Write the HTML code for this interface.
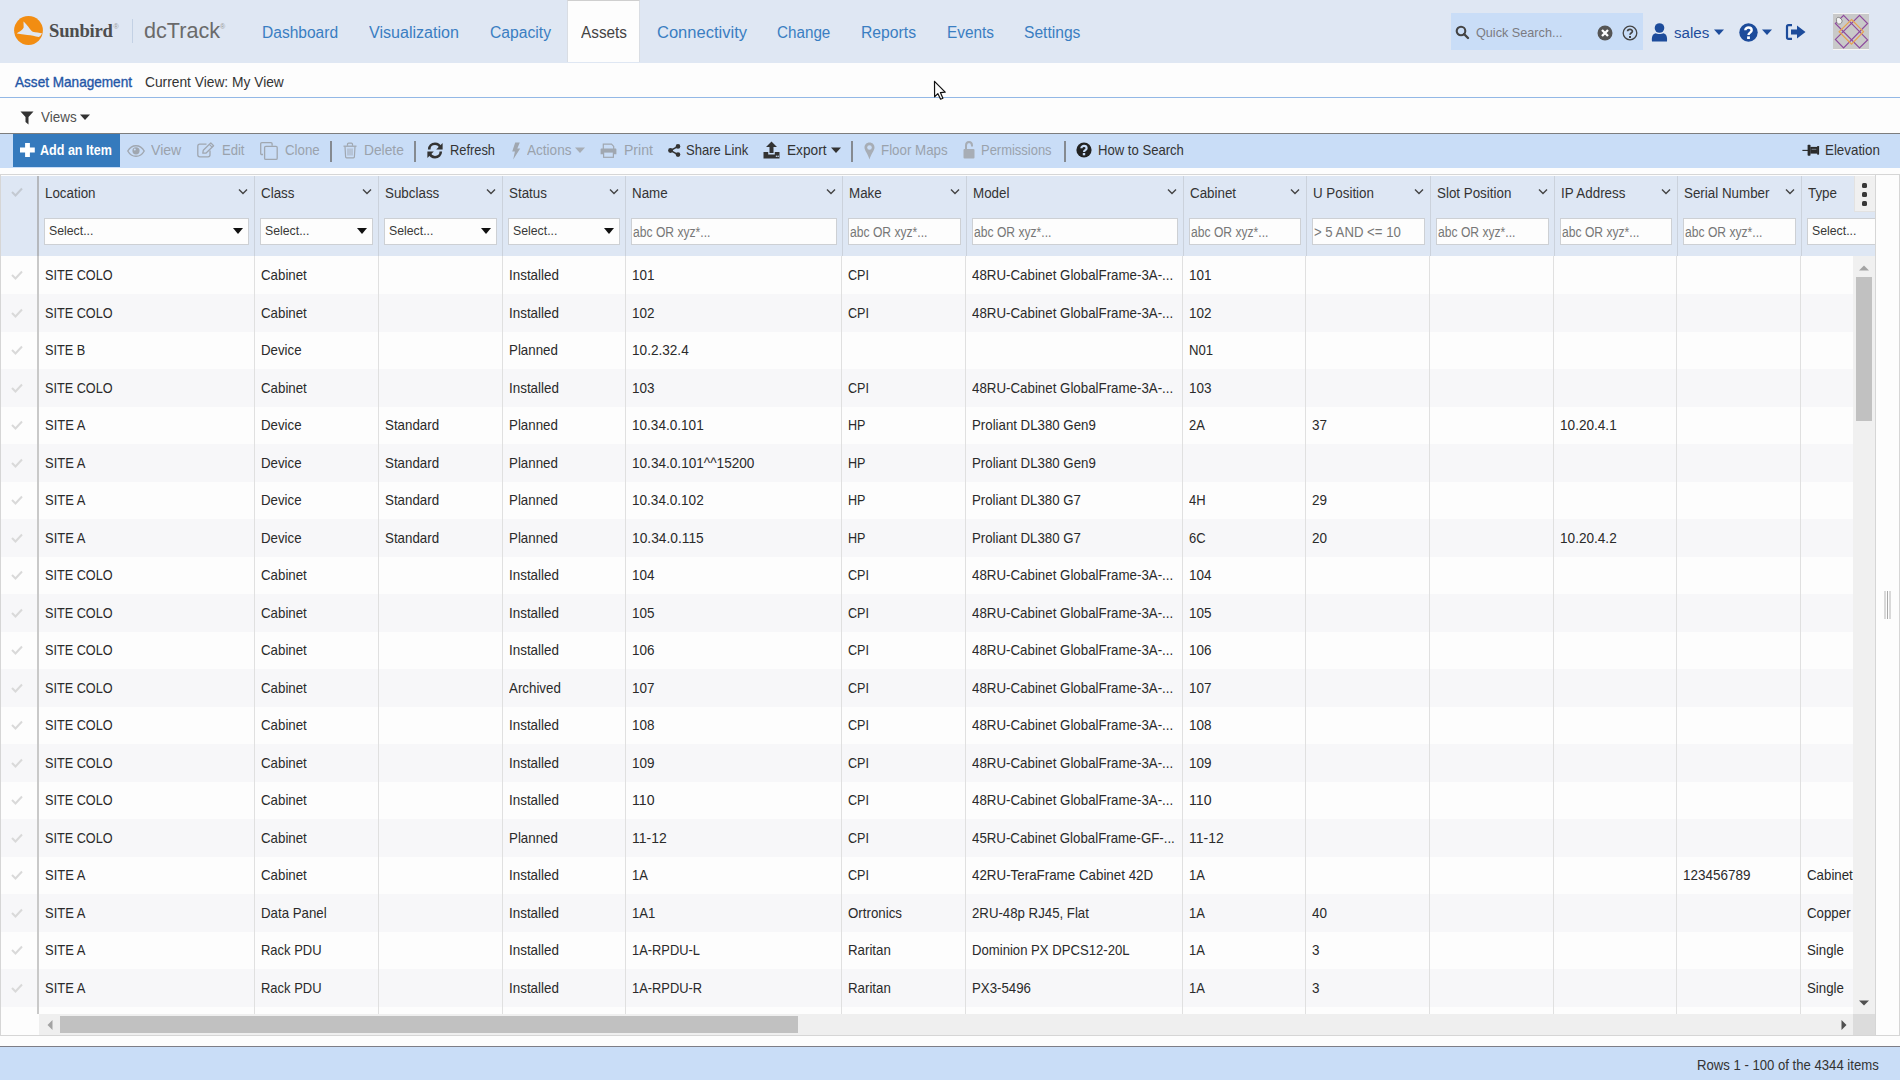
<!DOCTYPE html>
<html><head><meta charset="utf-8">
<style>
html,body{margin:0;padding:0;}
body{width:1900px;height:1080px;overflow:hidden;position:relative;background:#fdfdfd;font-family:"Liberation Sans",sans-serif;color:#333;}
.a{position:absolute;}
.t{position:absolute;white-space:nowrap;line-height:1;transform-origin:0 0;}
.ico{position:absolute;overflow:visible;}
#hdr{position:absolute;left:0;top:0;width:1900px;height:63px;background:#dfe7f3;}
#hdrline{display:none}
#tab{position:absolute;left:567px;top:0;width:73px;height:62px;background:#fdfdfd;border-left:1px solid #d9dde3;border-right:1px solid #d9dde3;border-top:1px solid #cfcfcf;box-sizing:border-box;}
#bcline{position:absolute;left:0;top:97px;width:1900px;height:1px;background:#93b8e6;}
#tb{position:absolute;left:0;top:133px;width:1900px;height:35px;background:#c9ddf7;border-top:1px solid #7d7d7d;box-sizing:border-box;}
.sep{position:absolute;top:141px;width:1.6px;height:21px;background:#858a91;}
#gbox{position:absolute;left:0;top:174px;width:1900px;height:862px;border:1px solid #d6d6d6;box-sizing:border-box;}
#gh{position:absolute;left:1px;top:176px;width:1874px;height:80px;background:#dee7f4;}
#ghc{position:absolute;left:0;top:0;width:1875px;height:256px;overflow:hidden;}
.hs{position:absolute;top:176px;width:1px;height:80px;background:#cbd2dc;}
.chev{position:absolute;top:188px;width:10px;height:8px;}
.fi{position:absolute;top:218px;height:27px;background:#fdfdfd;border:1px solid #cdd0d4;box-sizing:border-box;}
.tri{position:absolute;top:228px;width:0;height:0;border-left:5px solid transparent;border-right:5px solid transparent;border-top:6px solid #111;}
#body{position:absolute;left:0;top:256px;width:1853px;height:758px;overflow:hidden;}
.r{position:absolute;left:0;width:1853px;height:38.5px;background:#f7f7f9;}
.vl{position:absolute;top:0;width:1px;height:758px;background:#e0e0e0;}
#vsb{position:absolute;left:1853px;top:256px;width:22px;height:758px;background:#f0f0f0;}
#hsb{position:absolute;left:39px;top:1014px;width:1814px;height:21px;background:#efefef;}
#corner{position:absolute;left:1853px;top:1014px;width:22px;height:21px;background:#dcdcdc;}
#gright{position:absolute;left:1875px;top:175px;width:1px;height:860px;background:#d6d6d6;}
#gleftw{position:absolute;left:1px;top:1014px;width:38px;height:21px;background:#fdfdfd;}
#foot{position:absolute;left:0;top:1046px;width:1900px;height:34px;background:#c9ddf7;border-top:1px solid #7d7d86;box-sizing:border-box;}
</style></head><body>
<div id="hdr"></div><div id="hdrline"></div>
<div id="tab"></div>
<svg class="ico" style="left:14px;top:15.8px" width="29" height="29" viewBox="0 0 750 750">
 <circle cx="375" cy="375" r="372" fill="#f28d12"/>
 <path d="M245 140 C260 140 300 200 365 270 C410 330 450 390 485 410 C560 425 660 440 735 455 C700 480 680 530 645 545 C540 520 450 495 345 490 C250 480 160 470 75 452 C120 410 200 390 250 300 Z" fill="#dfe7f3"/>
</svg>
<div class="t" style="left:49px;top:20px;font-family:'Liberation Serif',serif;font-weight:bold;font-size:18.6px;line-height:22px;color:#4d4d4d;letter-spacing:-0.2px">Sunbird</div>
<div class="t" style="left:113.5px;top:23px;font-size:7px;color:#999">&#174;</div>
<div class="a" style="left:132px;top:19px;width:1px;height:24px;background:#c3d1e4"></div>
<div class="t" style="left:144px;top:20px;font-size:21.6px;color:#6a6a6a">dcTrack</div>
<div class="t" style="left:220px;top:23px;font-size:7px;color:#999">&#174;</div>
<div class="t" style="left:262.10px;top:25.00px;font-size:16px;color:#3a7ec2;transform:scaleX(0.9722);">Dashboard</div>
<div class="t" style="left:369.00px;top:25.00px;font-size:16px;color:#3a7ec2;transform:scaleX(1.0051);">Visualization</div>
<div class="t" style="left:489.60px;top:25.00px;font-size:16px;color:#3a7ec2;transform:scaleX(0.9799);">Capacity</div>
<div class="t" style="left:581.10px;top:25.00px;font-size:16px;color:#444;transform:scaleX(0.9580);">Assets</div>
<div class="t" style="left:657.00px;top:25.00px;font-size:16px;color:#3a7ec2;transform:scaleX(1.0327);">Connectivity</div>
<div class="t" style="left:777.40px;top:25.00px;font-size:16px;color:#3a7ec2;transform:scaleX(0.9510);">Change</div>
<div class="t" style="left:861.00px;top:25.00px;font-size:16px;color:#3a7ec2;transform:scaleX(0.9817);">Reports</div>
<div class="t" style="left:946.70px;top:25.00px;font-size:16px;color:#3a7ec2;transform:scaleX(0.9609);">Events</div>
<div class="t" style="left:1023.70px;top:25.00px;font-size:16px;color:#3a7ec2;transform:scaleX(0.9756);">Settings</div>
<div class="a" style="left:1451px;top:13px;width:192px;height:37px;background:#c9ddf7"></div>
<svg class="ico" style="left:1455px;top:25px" width="15" height="15" viewBox="0 0 15 15"><circle cx="6" cy="6" r="4.3" fill="none" stroke="#444" stroke-width="2.1"/><path d="M9 9 L13 13" stroke="#444" stroke-width="2.4" stroke-linecap="round"/></svg>
<svg class="ico" style="left:1597px;top:25px" width="16" height="16" viewBox="0 0 16 16"><circle cx="8" cy="8" r="7.5" fill="#555"/><path d="M5 5 L11 11 M11 5 L5 11" stroke="#fff" stroke-width="2.3"/></svg>
<svg class="ico" style="left:1622px;top:25px" width="16" height="16" viewBox="0 0 16 16"><circle cx="8" cy="8" r="6.8" fill="none" stroke="#444" stroke-width="1.3"/><path d="M5.6 6.2 C5.6 3.8 10.4 3.8 10.4 6.2 C10.4 8 8 8 8 9.8" fill="none" stroke="#444" stroke-width="1.7"/><rect x="7" y="11" width="2" height="2" fill="#444"/></svg>
<svg class="ico" style="left:1651px;top:23px" width="17" height="19" viewBox="0 0 17 19"><circle cx="8.5" cy="5" r="4.8" fill="#1d4c9b"/><path d="M1 18.5 C0.5 14 1.5 11 4.5 10.2 C6 11.2 11 11.2 12.5 10.2 C15.5 11 16.5 14 16 18.5 Z" fill="#1d4c9b"/></svg>
<svg class="ico" style="left:1714px;top:29px" width="10" height="7" viewBox="0 0 10 7"><path d="M0 0.5 L10 0.5 L5 6 Z" fill="#1d4c9b"/></svg>
<svg class="ico" style="left:1739px;top:23px" width="19" height="19" viewBox="0 0 19 19"><circle cx="9.5" cy="9.5" r="9.2" fill="#1d4c9b"/><path d="M6.3 7.3 C6.3 3.6 12.7 3.6 12.7 7.3 C12.7 9.6 9.5 9.6 9.5 12" fill="none" stroke="#fff" stroke-width="2.4"/><rect x="8.1" y="13.4" width="2.8" height="2.6" fill="#fff"/></svg>
<svg class="ico" style="left:1762px;top:29px" width="10" height="7" viewBox="0 0 10 7"><path d="M0 0.5 L10 0.5 L5 6 Z" fill="#1d4c9b"/></svg>
<svg class="ico" style="left:1786px;top:24px" width="20" height="16" viewBox="0 0 20 16"><path d="M6 1.2 L2.5 1.2 C1.5 1.2 1 1.8 1 2.8 L1 13.2 C1 14.2 1.5 14.8 2.5 14.8 L6 14.8" fill="none" stroke="#1d4c9b" stroke-width="2.2"/><path d="M5 5.5 L11 5.5 L11 1.5 L19.5 8 L11 14.5 L11 10.5 L5 10.5 Z" fill="#1d4c9b"/></svg>
<div class="a" style="left:1833px;top:13px;width:36px;height:1px;background:#f6f6f6"></div>
<div class="a" style="left:1833px;top:49px;width:36px;height:1px;background:#f6f6f6"></div>
<svg class="ico" style="left:1833px;top:14px" width="36" height="35" viewBox="0 0 36 35"><rect x="0" y="0" width="36" height="35" fill="#c9c9c9"/>
<g fill="none" stroke="#8e4a9e" stroke-width="1.2"><path d="M10.6 1.4 L34.6 25.9 L26.5 34 L2.4 9.5 Z"/><path d="M26.5 1.4 L34.6 9.5 L10.6 33.8 L2.4 25.4 Z"/></g>
<path d="M18.5 5.5 L30.5 17.7 L18.5 30.2 L6.1 17.7 Z" fill="none" stroke="#e9a450" stroke-width="1.2"/>
<path d="M3.5 6 C3 4 5 2.5 7 4 L9 6 C9.5 8.5 8 10.5 5.5 10 C4 9.5 3.5 8 3.5 6 Z" fill="#f4f4f4" stroke="#777" stroke-width="0.8"/></svg>

<div class="t" style="left:1476.00px;top:26.00px;font-size:13.1px;color:#7b7b82;transform:scaleX(0.9659);">Quick Search...</div>
<div class="t" style="left:1674.00px;top:25.00px;font-size:15.4px;color:#1d4c9b;transform:scaleX(0.9819);">sales</div>
<div class="t" style="left:15.00px;top:75.00px;font-size:14.5px;color:#2456a6;transform:scaleX(0.9365);-webkit-text-stroke:0.35px #2456a6;">Asset Management</div>
<div class="t" style="left:145.00px;top:75.00px;font-size:14.5px;color:#333;transform:scaleX(0.9499);">Current View: My View</div>
<div id="bcline"></div>
<svg class="ico" style="left:19.5px;top:110.5px" width="14" height="14" viewBox="0 0 14 14"><path d="M0.5 0.5 L13.5 0.5 L8.5 6 L8.5 13.5 L5.5 11 L5.5 6 Z" fill="#333"/></svg>
<div class="t" style="left:40.70px;top:111.00px;font-size:13.8px;color:#505050;transform:scaleX(0.9737);">Views</div>
<svg class="ico" style="left:80px;top:114px" width="10" height="7" viewBox="0 0 10 7"><path d="M0 0.5 L10 0.5 L5 6 Z" fill="#333"/></svg>
<svg class="ico" style="left:933px;top:80px" width="13" height="20" viewBox="0 0 13 20"><path d="M1.5 1.3 L1.6 16.8 L4.8 13.6 L7.6 19.2 L9.9 18.2 L7.4 12.6 L12.2 12.2 Z" fill="#fdfdfd" stroke="#111" stroke-width="1.2" stroke-linejoin="round"/></svg>
<div id="tb"></div>
<div class="a" style="left:13px;top:134px;width:107px;height:33px;background:#357abd"></div>
<svg class="ico" style="left:19.5px;top:143px" width="15" height="14" viewBox="0 0 15 14"><path d="M5.1 0 H9.9 V4.6 H14.8 V9.4 H9.9 V14 H5.1 V9.4 H0 V4.6 H5.1 Z" fill="#fff"/></svg>
<svg class="ico" style="left:127px;top:145px" width="18" height="12" viewBox="0 0 18 12"><path d="M0.8 6 C3 2 6 0.7 9 0.7 C12 0.7 15 2 17.2 6 C15 10 12 11.3 9 11.3 C6 11.3 3 10 0.8 6 Z" fill="none" stroke="#a0a7b0" stroke-width="1.4"/><circle cx="9" cy="5.8" r="3.6" fill="#a0a7b0"/><circle cx="7.8" cy="4.6" r="1" fill="#c9ddf7"/></svg>
<svg class="ico" style="left:197px;top:142px" width="18" height="16" viewBox="0 0 18 16"><path d="M9.5 2.2 H2.8 C1.6 2.2 0.8 3 0.8 4.2 V12.8 C0.8 14 1.6 14.8 2.8 14.8 H11 C12.2 14.8 13 14 13 12.8 V8.5" fill="none" stroke="#a0a7b0" stroke-width="1.3"/><path d="M5.8 11.2 L6.3 8.2 L13.8 0.9 L16.6 3.7 L9.1 11 Z" fill="none" stroke="#a0a7b0" stroke-width="1.3" stroke-linejoin="round"/><path d="M12.3 2.4 L15.1 5.2" stroke="#a0a7b0" stroke-width="1.2"/></svg>
<svg class="ico" style="left:260px;top:142px" width="18" height="18" viewBox="0 0 18 18"><path d="M3 12.5 H1.8 C1.2 12.5 0.7 12 0.7 11.4 V1.8 C0.7 1.2 1.2 0.7 1.8 0.7 H11 C11.6 0.7 12.1 1.2 12.1 1.8 V3.8" fill="none" stroke="#a0a7b0" stroke-width="1.3"/><rect x="4.6" y="4.4" width="12.6" height="13" rx="1.2" fill="none" stroke="#a0a7b0" stroke-width="1.3"/></svg>
<div class="sep" style="left:330px"></div>
<svg class="ico" style="left:343px;top:142px" width="14" height="17" viewBox="0 0 14 17"><path d="M4.5 3.8 V2.2 C4.5 1.6 5 1.2 5.6 1.2 H8.4 C9 1.2 9.5 1.6 9.5 2.2 V3.8" fill="none" stroke="#a0a7b0" stroke-width="1.2"/><path d="M0.5 4.2 H13.5" stroke="#a0a7b0" stroke-width="1.3"/><path d="M2 4.6 L2.6 14.8 C2.6 15.5 3 15.8 3.6 15.8 H10.4 C11 15.8 11.4 15.5 11.4 14.8 L12 4.6" fill="none" stroke="#a0a7b0" stroke-width="1.2"/><path d="M5 6.5 V13.5 M7 6.5 V13.5 M9 6.5 V13.5" stroke="#a0a7b0" stroke-width="0.9"/></svg>
<div class="sep" style="left:414px"></div>
<svg class="ico" style="left:427px;top:142px" width="16" height="17" viewBox="0 0 16 17"><path d="M13.5 6 C12.5 3 10.5 1.8 8 1.8 C4.6 1.8 2.2 4.3 2.2 7.5" fill="none" stroke="#333" stroke-width="2.6"/><path d="M15.6 1 V7.5 H9.2 Z" fill="#333"/><path d="M2.5 11 C3.5 14 5.5 15.2 8 15.2 C11.4 15.2 13.8 12.7 13.8 9.5" fill="none" stroke="#333" stroke-width="2.6"/><path d="M0.4 16 V9.5 H6.8 Z" fill="#333"/></svg>
<svg class="ico" style="left:510.5px;top:142px" width="10" height="18" viewBox="0 0 10 18"><path d="M4.2 0.5 H8.8 L6.3 6.5 H9.2 L2.2 17.5 L3.9 9.5 H1.2 Z" fill="#a0a7b0"/></svg>
<svg class="ico" style="left:575px;top:147px" width="10" height="7" viewBox="0 0 10 7"><path d="M0 0.5 L10 0.5 L5 6 Z" fill="#a7adb5"/></svg>
<svg class="ico" style="left:600px;top:143px" width="17" height="15" viewBox="0 0 17 15"><path d="M3.3 6 V1.2 H11.5 L13.7 3.4 V6" fill="none" stroke="#a0a7b0" stroke-width="1.2"/><path d="M0.6 6.5 C0.6 5.8 1 5.4 1.7 5.4 H15.3 C16 5.4 16.4 5.8 16.4 6.5 V11.3 H0.6 Z" fill="#a0a7b0"/><rect x="3.6" y="9" width="9.8" height="5.3" fill="#c9ddf7" stroke="#a0a7b0" stroke-width="1.2"/></svg>
<svg class="ico" style="left:668px;top:144px" width="13" height="13" viewBox="0 0 13 13"><circle cx="10" cy="2.4" r="2.3" fill="#333"/><circle cx="2.5" cy="6.5" r="2.4" fill="#333"/><circle cx="10" cy="10.6" r="2.3" fill="#333"/><path d="M10 2.4 L2.5 6.5 L10 10.6" fill="none" stroke="#333" stroke-width="1.5"/></svg>
<svg class="ico" style="left:763px;top:141px" width="17" height="18" viewBox="0 0 17 18"><path d="M8.5 0.5 L14 6 H10.5 V12 H6.5 V6 H3 Z" fill="#333"/><path d="M0.5 11 H5.2 V13.5 H11.8 V11 H16.5 V17.5 H0.5 Z" fill="#333"/><circle cx="13.5" cy="15.3" r="0.8" fill="#c9ddf7"/><circle cx="15.2" cy="15.3" r="0.8" fill="#c9ddf7"/></svg>
<svg class="ico" style="left:831px;top:147px" width="10" height="7" viewBox="0 0 10 7"><path d="M0 0.5 L10 0.5 L5 6 Z" fill="#333"/></svg>
<div class="sep" style="left:851px"></div>
<svg class="ico" style="left:863.5px;top:142px" width="11" height="18" viewBox="0 0 11 18"><path d="M5.5 0.5 C2.5 0.5 0.5 2.7 0.5 5.5 C0.5 8.5 4 12 5.5 17.5 C7 12 10.5 8.5 10.5 5.5 C10.5 2.7 8.5 0.5 5.5 0.5 Z" fill="#a7adb5"/><circle cx="5.5" cy="5.5" r="2.3" fill="#c9ddf7"/></svg>
<svg class="ico" style="left:962.5px;top:141px" width="12" height="18" viewBox="0 0 12 18"><path d="M3 8 V4.5 C3 2.3 4.3 1 6 1 C7.7 1 9 2.3 9 4.5 V5.5" fill="none" stroke="#a7adb5" stroke-width="2"/><rect x="0.5" y="8" width="11" height="9.5" rx="1" fill="#a7adb5"/></svg>
<div class="sep" style="left:1064px"></div>
<svg class="ico" style="left:1075.5px;top:142px" width="16" height="16" viewBox="0 0 16 16"><circle cx="8" cy="8" r="7.6" fill="#222"/><path d="M5.4 6.2 C5.4 3.2 10.6 3.2 10.6 6.2 C10.6 8.2 8 8 8 10" fill="none" stroke="#c9ddf7" stroke-width="2.2"/><rect x="6.8" y="11" width="2.4" height="2.3" fill="#c9ddf7"/></svg>
<svg class="ico" style="left:1802px;top:143px" width="18" height="14" viewBox="0 0 18 14"><path d="M0.4 7.4 H6" stroke="#2a2a2a" stroke-width="1.1"/><rect x="5.6" y="1.7" width="2.9" height="11.1" rx="0.8" fill="#2a2a2a"/><rect x="8.3" y="3.9" width="7.2" height="6.7" fill="#2a2a2a"/><rect x="15.1" y="3" width="2" height="8.7" rx="0.6" fill="#2a2a2a"/><path d="M9.6 6.3 H14.4" stroke="#8a95a3" stroke-width="0.8"/></svg>

<div class="t" style="left:40.20px;top:143.00px;font-size:14.5px;color:#fff;font-weight:bold;transform:scaleX(0.8653);">Add an Item</div>
<div class="t" style="left:151.40px;top:143.00px;font-size:14.5px;color:#9aa2ac;transform:scaleX(0.9722);">View</div>
<div class="t" style="left:221.70px;top:143.00px;font-size:14.5px;color:#9aa2ac;transform:scaleX(0.9005);">Edit</div>
<div class="t" style="left:284.70px;top:143.00px;font-size:14.5px;color:#9aa2ac;transform:scaleX(0.9159);">Clone</div>
<div class="t" style="left:364.00px;top:143.00px;font-size:14.5px;color:#9aa2ac;transform:scaleX(0.9496);">Delete</div>
<div class="t" style="left:450.10px;top:143.00px;font-size:14.5px;color:#333;transform:scaleX(0.8863);">Refresh</div>
<div class="t" style="left:526.50px;top:143.00px;font-size:14.5px;color:#9aa2ac;transform:scaleX(0.9359);">Actions</div>
<div class="t" style="left:623.90px;top:143.00px;font-size:14.5px;color:#9aa2ac;transform:scaleX(0.9693);">Print</div>
<div class="t" style="left:686.00px;top:143.00px;font-size:14.5px;color:#333;transform:scaleX(0.8973);">Share Link</div>
<div class="t" style="left:786.60px;top:143.00px;font-size:14.5px;color:#333;transform:scaleX(0.9426);">Export</div>
<div class="t" style="left:880.70px;top:143.00px;font-size:14.5px;color:#9aa2ac;transform:scaleX(0.9197);">Floor Maps</div>
<div class="t" style="left:981.20px;top:143.00px;font-size:14.5px;color:#9aa2ac;transform:scaleX(0.8941);">Permissions</div>
<div class="t" style="left:1098.00px;top:143.00px;font-size:14.5px;color:#333;transform:scaleX(0.9033);">How to Search</div>
<div class="t" style="left:1824.60px;top:143.00px;font-size:14.5px;color:#333;transform:scaleX(0.9204);">Elevation</div>
<div id="gbox"></div><div id="gh"></div>
<div id="ghc">
<div class="a" style="left:37px;top:176px;width:2px;height:80px;background:#b5b8bd"></div>
<svg class="ico" style="left:11px;top:187px" width="12" height="10" viewBox="0 0 12 10"><path d="M1 5 L4.5 8.5 L11 1.5" fill="none" stroke="#c3c9d1" stroke-width="2"/></svg>
<div class="t" style="left:45.00px;top:186.00px;font-size:14px;color:#333;transform:scaleX(0.9550);">Location</div>
<svg class="chev" style="left:238px" viewBox="0 0 10 8"><path d="M1 1.5 L5 5.5 L9 1.5" fill="none" stroke="#444" stroke-width="1.4"/></svg>
<div class="fi" style="left:44px;width:204.5px"></div>
<div class="tri" style="left:233px"></div>
<div class="t" style="left:49.00px;top:224.00px;font-size:13.7px;color:#383838;transform:scaleX(0.8971);">Select...</div>
<div class="hs" style="left:254px"></div>
<div class="t" style="left:261.00px;top:186.00px;font-size:14px;color:#333;transform:scaleX(0.9550);">Class</div>
<svg class="chev" style="left:362px" viewBox="0 0 10 8"><path d="M1 1.5 L5 5.5 L9 1.5" fill="none" stroke="#444" stroke-width="1.4"/></svg>
<div class="fi" style="left:260px;width:112.5px"></div>
<div class="tri" style="left:357px"></div>
<div class="t" style="left:265.00px;top:224.00px;font-size:13.7px;color:#383838;transform:scaleX(0.8971);">Select...</div>
<div class="hs" style="left:378px"></div>
<div class="t" style="left:385.00px;top:186.00px;font-size:14px;color:#333;transform:scaleX(0.9550);">Subclass</div>
<svg class="chev" style="left:486px" viewBox="0 0 10 8"><path d="M1 1.5 L5 5.5 L9 1.5" fill="none" stroke="#444" stroke-width="1.4"/></svg>
<div class="fi" style="left:384px;width:112.5px"></div>
<div class="tri" style="left:481px"></div>
<div class="t" style="left:389.00px;top:224.00px;font-size:13.7px;color:#383838;transform:scaleX(0.8971);">Select...</div>
<div class="hs" style="left:502px"></div>
<div class="t" style="left:509.00px;top:186.00px;font-size:14px;color:#333;transform:scaleX(0.9550);">Status</div>
<svg class="chev" style="left:609px" viewBox="0 0 10 8"><path d="M1 1.5 L5 5.5 L9 1.5" fill="none" stroke="#444" stroke-width="1.4"/></svg>
<div class="fi" style="left:508px;width:111.5px"></div>
<div class="tri" style="left:604px"></div>
<div class="t" style="left:513.00px;top:224.00px;font-size:13.7px;color:#383838;transform:scaleX(0.8971);">Select...</div>
<div class="hs" style="left:625px"></div>
<div class="t" style="left:632.00px;top:186.00px;font-size:14px;color:#333;transform:scaleX(0.9550);">Name</div>
<svg class="chev" style="left:826px" viewBox="0 0 10 8"><path d="M1 1.5 L5 5.5 L9 1.5" fill="none" stroke="#444" stroke-width="1.4"/></svg>
<div class="fi" style="left:631px;width:205.5px"></div>
<div class="t" style="left:633.00px;top:226.00px;font-size:13.8px;color:#777;transform:scaleX(0.8776);">abc OR xyz*...</div>
<div class="hs" style="left:842px"></div>
<div class="t" style="left:849.00px;top:186.00px;font-size:14px;color:#333;transform:scaleX(0.9550);">Make</div>
<svg class="chev" style="left:950px" viewBox="0 0 10 8"><path d="M1 1.5 L5 5.5 L9 1.5" fill="none" stroke="#444" stroke-width="1.4"/></svg>
<div class="fi" style="left:848px;width:112.5px"></div>
<div class="t" style="left:850.00px;top:226.00px;font-size:13.8px;color:#777;transform:scaleX(0.8776);">abc OR xyz*...</div>
<div class="hs" style="left:966px"></div>
<div class="t" style="left:973.00px;top:186.00px;font-size:14px;color:#333;transform:scaleX(0.9550);">Model</div>
<svg class="chev" style="left:1167px" viewBox="0 0 10 8"><path d="M1 1.5 L5 5.5 L9 1.5" fill="none" stroke="#444" stroke-width="1.4"/></svg>
<div class="fi" style="left:972px;width:205.5px"></div>
<div class="t" style="left:974.00px;top:226.00px;font-size:13.8px;color:#777;transform:scaleX(0.8776);">abc OR xyz*...</div>
<div class="hs" style="left:1183px"></div>
<div class="t" style="left:1190.00px;top:186.00px;font-size:14px;color:#333;transform:scaleX(0.9550);">Cabinet</div>
<svg class="chev" style="left:1290px" viewBox="0 0 10 8"><path d="M1 1.5 L5 5.5 L9 1.5" fill="none" stroke="#444" stroke-width="1.4"/></svg>
<div class="fi" style="left:1189px;width:111.5px"></div>
<div class="t" style="left:1191.00px;top:226.00px;font-size:13.8px;color:#777;transform:scaleX(0.8776);">abc OR xyz*...</div>
<div class="hs" style="left:1306px"></div>
<div class="t" style="left:1313.00px;top:186.00px;font-size:14px;color:#333;transform:scaleX(0.9550);">U Position</div>
<svg class="chev" style="left:1414px" viewBox="0 0 10 8"><path d="M1 1.5 L5 5.5 L9 1.5" fill="none" stroke="#444" stroke-width="1.4"/></svg>
<div class="fi" style="left:1312px;width:112.5px"></div>
<div class="t" style="left:1314.00px;top:226.00px;font-size:13.8px;color:#777;transform:scaleX(0.9548);">&gt; 5 AND &lt;= 10</div>
<div class="hs" style="left:1430px"></div>
<div class="t" style="left:1437.00px;top:186.00px;font-size:14px;color:#333;transform:scaleX(0.9550);">Slot Position</div>
<svg class="chev" style="left:1538px" viewBox="0 0 10 8"><path d="M1 1.5 L5 5.5 L9 1.5" fill="none" stroke="#444" stroke-width="1.4"/></svg>
<div class="fi" style="left:1436px;width:112.5px"></div>
<div class="t" style="left:1438.00px;top:226.00px;font-size:13.8px;color:#777;transform:scaleX(0.8776);">abc OR xyz*...</div>
<div class="hs" style="left:1554px"></div>
<div class="t" style="left:1561.00px;top:186.00px;font-size:14px;color:#333;transform:scaleX(0.9550);">IP Address</div>
<svg class="chev" style="left:1661px" viewBox="0 0 10 8"><path d="M1 1.5 L5 5.5 L9 1.5" fill="none" stroke="#444" stroke-width="1.4"/></svg>
<div class="fi" style="left:1560px;width:111.5px"></div>
<div class="t" style="left:1562.00px;top:226.00px;font-size:13.8px;color:#777;transform:scaleX(0.8776);">abc OR xyz*...</div>
<div class="hs" style="left:1677px"></div>
<div class="t" style="left:1684.00px;top:186.00px;font-size:14px;color:#333;transform:scaleX(0.9550);">Serial Number</div>
<svg class="chev" style="left:1785px" viewBox="0 0 10 8"><path d="M1 1.5 L5 5.5 L9 1.5" fill="none" stroke="#444" stroke-width="1.4"/></svg>
<div class="fi" style="left:1683px;width:112.5px"></div>
<div class="t" style="left:1685.00px;top:226.00px;font-size:13.8px;color:#777;transform:scaleX(0.8776);">abc OR xyz*...</div>
<div class="hs" style="left:1801px"></div>
<div class="t" style="left:1808.00px;top:186.00px;font-size:14px;color:#333;transform:scaleX(0.9550);">Type</div>
<div class="fi" style="left:1807px;width:112.5px"></div>
<div class="t" style="left:1812.00px;top:224.00px;font-size:13.7px;color:#383838;transform:scaleX(0.8971);">Select...</div>
<div class="a" style="left:1854px;top:176px;width:21px;height:36px;background:#f0f0f0;border-left:1px solid #e2e2e2;border-bottom:1px solid #e2e2e2;box-sizing:border-box"></div>
<div class="a" style="left:1862px;top:183px;width:5px;height:5px;border-radius:1.5px;background:#383838"></div>
<div class="a" style="left:1862px;top:192px;width:5px;height:5px;border-radius:1.5px;background:#383838"></div>
<div class="a" style="left:1862px;top:200.5px;width:5px;height:5px;border-radius:1.5px;background:#383838"></div>
</div>
<div id="body">
<div class="r" style="top:37.5px"></div>
<div class="r" style="top:112.5px"></div>
<div class="r" style="top:187.5px"></div>
<div class="r" style="top:262.5px"></div>
<div class="r" style="top:337.5px"></div>
<div class="r" style="top:412.5px"></div>
<div class="r" style="top:487.5px"></div>
<div class="r" style="top:562.5px"></div>
<div class="r" style="top:637.5px"></div>
<div class="r" style="top:712.5px"></div>
<div class="vl" style="left:254px"></div>
<div class="vl" style="left:378px"></div>
<div class="vl" style="left:502px"></div>
<div class="vl" style="left:625px"></div>
<div class="vl" style="left:841px"></div>
<div class="vl" style="left:965px"></div>
<div class="vl" style="left:1182px"></div>
<div class="vl" style="left:1305px"></div>
<div class="vl" style="left:1429px"></div>
<div class="vl" style="left:1553px"></div>
<div class="vl" style="left:1676px"></div>
<div class="vl" style="left:1800px"></div>
<div class="vl" style="left:37px;width:2px;background:#c9c9c9"></div>
<svg class="ico" style="left:11px;top:14.0px" width="12" height="10" viewBox="0 0 12 10"><path d="M1 5 L4.5 8.5 L11 1.5" fill="none" stroke="#d9d9d9" stroke-width="2"/></svg>
<div class="t" style="left:45.00px;top:12.00px;font-size:14.5px;color:#2a2a2a;transform:scaleX(0.8742);">SITE COLO</div>
<div class="t" style="left:261.00px;top:12.00px;font-size:14.5px;color:#2a2a2a;transform:scaleX(0.9164);">Cabinet</div>
<div class="t" style="left:509.00px;top:12.00px;font-size:14.5px;color:#2a2a2a;transform:scaleX(0.9245);">Installed</div>
<div class="t" style="left:632.00px;top:12.00px;font-size:14.5px;color:#2a2a2a;transform:scaleX(0.9300);">101</div>
<div class="t" style="left:848.00px;top:12.00px;font-size:14.5px;color:#2a2a2a;transform:scaleX(0.8690);">CPI</div>
<div class="t" style="left:972.00px;top:12.00px;font-size:14.5px;color:#2a2a2a;transform:scaleX(0.9179);">48RU-Cabinet GlobalFrame-3A-...</div>
<div class="t" style="left:1189.00px;top:12.00px;font-size:14.5px;color:#2a2a2a;transform:scaleX(0.9300);">101</div>
<svg class="ico" style="left:11px;top:51.5px" width="12" height="10" viewBox="0 0 12 10"><path d="M1 5 L4.5 8.5 L11 1.5" fill="none" stroke="#d9d9d9" stroke-width="2"/></svg>
<div class="t" style="left:45.00px;top:50.00px;font-size:14.5px;color:#2a2a2a;transform:scaleX(0.8742);">SITE COLO</div>
<div class="t" style="left:261.00px;top:50.00px;font-size:14.5px;color:#2a2a2a;transform:scaleX(0.9164);">Cabinet</div>
<div class="t" style="left:509.00px;top:50.00px;font-size:14.5px;color:#2a2a2a;transform:scaleX(0.9245);">Installed</div>
<div class="t" style="left:632.00px;top:50.00px;font-size:14.5px;color:#2a2a2a;transform:scaleX(0.9300);">102</div>
<div class="t" style="left:848.00px;top:50.00px;font-size:14.5px;color:#2a2a2a;transform:scaleX(0.8690);">CPI</div>
<div class="t" style="left:972.00px;top:50.00px;font-size:14.5px;color:#2a2a2a;transform:scaleX(0.9179);">48RU-Cabinet GlobalFrame-3A-...</div>
<div class="t" style="left:1189.00px;top:50.00px;font-size:14.5px;color:#2a2a2a;transform:scaleX(0.9300);">102</div>
<svg class="ico" style="left:11px;top:89.0px" width="12" height="10" viewBox="0 0 12 10"><path d="M1 5 L4.5 8.5 L11 1.5" fill="none" stroke="#d9d9d9" stroke-width="2"/></svg>
<div class="t" style="left:45.00px;top:87.00px;font-size:14.5px;color:#2a2a2a;transform:scaleX(0.8778);">SITE B</div>
<div class="t" style="left:261.00px;top:87.00px;font-size:14.5px;color:#2a2a2a;transform:scaleX(0.9148);">Device</div>
<div class="t" style="left:509.00px;top:87.00px;font-size:14.5px;color:#2a2a2a;transform:scaleX(0.9181);">Planned</div>
<div class="t" style="left:632.00px;top:87.00px;font-size:14.5px;color:#2a2a2a;transform:scaleX(0.9378);">10.2.32.4</div>
<div class="t" style="left:1189.00px;top:87.00px;font-size:14.5px;color:#2a2a2a;transform:scaleX(0.9060);">N01</div>
<svg class="ico" style="left:11px;top:126.5px" width="12" height="10" viewBox="0 0 12 10"><path d="M1 5 L4.5 8.5 L11 1.5" fill="none" stroke="#d9d9d9" stroke-width="2"/></svg>
<div class="t" style="left:45.00px;top:125.00px;font-size:14.5px;color:#2a2a2a;transform:scaleX(0.8742);">SITE COLO</div>
<div class="t" style="left:261.00px;top:125.00px;font-size:14.5px;color:#2a2a2a;transform:scaleX(0.9164);">Cabinet</div>
<div class="t" style="left:509.00px;top:125.00px;font-size:14.5px;color:#2a2a2a;transform:scaleX(0.9245);">Installed</div>
<div class="t" style="left:632.00px;top:125.00px;font-size:14.5px;color:#2a2a2a;transform:scaleX(0.9300);">103</div>
<div class="t" style="left:848.00px;top:125.00px;font-size:14.5px;color:#2a2a2a;transform:scaleX(0.8690);">CPI</div>
<div class="t" style="left:972.00px;top:125.00px;font-size:14.5px;color:#2a2a2a;transform:scaleX(0.9179);">48RU-Cabinet GlobalFrame-3A-...</div>
<div class="t" style="left:1189.00px;top:125.00px;font-size:14.5px;color:#2a2a2a;transform:scaleX(0.9300);">103</div>
<svg class="ico" style="left:11px;top:164.0px" width="12" height="10" viewBox="0 0 12 10"><path d="M1 5 L4.5 8.5 L11 1.5" fill="none" stroke="#d9d9d9" stroke-width="2"/></svg>
<div class="t" style="left:45.00px;top:162.00px;font-size:14.5px;color:#2a2a2a;transform:scaleX(0.8933);">SITE A</div>
<div class="t" style="left:261.00px;top:162.00px;font-size:14.5px;color:#2a2a2a;transform:scaleX(0.9148);">Device</div>
<div class="t" style="left:385.00px;top:162.00px;font-size:14.5px;color:#2a2a2a;transform:scaleX(0.9191);">Standard</div>
<div class="t" style="left:509.00px;top:162.00px;font-size:14.5px;color:#2a2a2a;transform:scaleX(0.9181);">Planned</div>
<div class="t" style="left:632.00px;top:162.00px;font-size:14.5px;color:#2a2a2a;transform:scaleX(0.9362);">10.34.0.101</div>
<div class="t" style="left:848.00px;top:162.00px;font-size:14.5px;color:#2a2a2a;transform:scaleX(0.8690);">HP</div>
<div class="t" style="left:972.00px;top:162.00px;font-size:14.5px;color:#2a2a2a;transform:scaleX(0.9141);">Proliant DL380 Gen9</div>
<div class="t" style="left:1189.00px;top:162.00px;font-size:14.5px;color:#2a2a2a;transform:scaleX(0.8967);">2A</div>
<div class="t" style="left:1312.00px;top:162.00px;font-size:14.5px;color:#2a2a2a;transform:scaleX(0.9300);">37</div>
<div class="t" style="left:1560.00px;top:162.00px;font-size:14.5px;color:#2a2a2a;transform:scaleX(0.9378);">10.20.4.1</div>
<svg class="ico" style="left:11px;top:201.5px" width="12" height="10" viewBox="0 0 12 10"><path d="M1 5 L4.5 8.5 L11 1.5" fill="none" stroke="#d9d9d9" stroke-width="2"/></svg>
<div class="t" style="left:45.00px;top:200.00px;font-size:14.5px;color:#2a2a2a;transform:scaleX(0.8933);">SITE A</div>
<div class="t" style="left:261.00px;top:200.00px;font-size:14.5px;color:#2a2a2a;transform:scaleX(0.9148);">Device</div>
<div class="t" style="left:385.00px;top:200.00px;font-size:14.5px;color:#2a2a2a;transform:scaleX(0.9191);">Standard</div>
<div class="t" style="left:509.00px;top:200.00px;font-size:14.5px;color:#2a2a2a;transform:scaleX(0.9181);">Planned</div>
<div class="t" style="left:632.00px;top:200.00px;font-size:14.5px;color:#2a2a2a;transform:scaleX(0.9377);">10.34.0.101^^15200</div>
<div class="t" style="left:848.00px;top:200.00px;font-size:14.5px;color:#2a2a2a;transform:scaleX(0.8690);">HP</div>
<div class="t" style="left:972.00px;top:200.00px;font-size:14.5px;color:#2a2a2a;transform:scaleX(0.9141);">Proliant DL380 Gen9</div>
<svg class="ico" style="left:11px;top:239.0px" width="12" height="10" viewBox="0 0 12 10"><path d="M1 5 L4.5 8.5 L11 1.5" fill="none" stroke="#d9d9d9" stroke-width="2"/></svg>
<div class="t" style="left:45.00px;top:237.00px;font-size:14.5px;color:#2a2a2a;transform:scaleX(0.8933);">SITE A</div>
<div class="t" style="left:261.00px;top:237.00px;font-size:14.5px;color:#2a2a2a;transform:scaleX(0.9148);">Device</div>
<div class="t" style="left:385.00px;top:237.00px;font-size:14.5px;color:#2a2a2a;transform:scaleX(0.9191);">Standard</div>
<div class="t" style="left:509.00px;top:237.00px;font-size:14.5px;color:#2a2a2a;transform:scaleX(0.9181);">Planned</div>
<div class="t" style="left:632.00px;top:237.00px;font-size:14.5px;color:#2a2a2a;transform:scaleX(0.9362);">10.34.0.102</div>
<div class="t" style="left:848.00px;top:237.00px;font-size:14.5px;color:#2a2a2a;transform:scaleX(0.8690);">HP</div>
<div class="t" style="left:972.00px;top:237.00px;font-size:14.5px;color:#2a2a2a;transform:scaleX(0.9121);">Proliant DL380 G7</div>
<div class="t" style="left:1189.00px;top:237.00px;font-size:14.5px;color:#2a2a2a;transform:scaleX(0.8955);">4H</div>
<div class="t" style="left:1312.00px;top:237.00px;font-size:14.5px;color:#2a2a2a;transform:scaleX(0.9300);">29</div>
<svg class="ico" style="left:11px;top:276.5px" width="12" height="10" viewBox="0 0 12 10"><path d="M1 5 L4.5 8.5 L11 1.5" fill="none" stroke="#d9d9d9" stroke-width="2"/></svg>
<div class="t" style="left:45.00px;top:275.00px;font-size:14.5px;color:#2a2a2a;transform:scaleX(0.8933);">SITE A</div>
<div class="t" style="left:261.00px;top:275.00px;font-size:14.5px;color:#2a2a2a;transform:scaleX(0.9148);">Device</div>
<div class="t" style="left:385.00px;top:275.00px;font-size:14.5px;color:#2a2a2a;transform:scaleX(0.9191);">Standard</div>
<div class="t" style="left:509.00px;top:275.00px;font-size:14.5px;color:#2a2a2a;transform:scaleX(0.9181);">Planned</div>
<div class="t" style="left:632.00px;top:275.00px;font-size:14.5px;color:#2a2a2a;transform:scaleX(0.9495);">10.34.0.115</div>
<div class="t" style="left:848.00px;top:275.00px;font-size:14.5px;color:#2a2a2a;transform:scaleX(0.8690);">HP</div>
<div class="t" style="left:972.00px;top:275.00px;font-size:14.5px;color:#2a2a2a;transform:scaleX(0.9121);">Proliant DL380 G7</div>
<div class="t" style="left:1189.00px;top:275.00px;font-size:14.5px;color:#2a2a2a;transform:scaleX(0.8955);">6C</div>
<div class="t" style="left:1312.00px;top:275.00px;font-size:14.5px;color:#2a2a2a;transform:scaleX(0.9300);">20</div>
<div class="t" style="left:1560.00px;top:275.00px;font-size:14.5px;color:#2a2a2a;transform:scaleX(0.9378);">10.20.4.2</div>
<svg class="ico" style="left:11px;top:314.0px" width="12" height="10" viewBox="0 0 12 10"><path d="M1 5 L4.5 8.5 L11 1.5" fill="none" stroke="#d9d9d9" stroke-width="2"/></svg>
<div class="t" style="left:45.00px;top:312.00px;font-size:14.5px;color:#2a2a2a;transform:scaleX(0.8742);">SITE COLO</div>
<div class="t" style="left:261.00px;top:312.00px;font-size:14.5px;color:#2a2a2a;transform:scaleX(0.9164);">Cabinet</div>
<div class="t" style="left:509.00px;top:312.00px;font-size:14.5px;color:#2a2a2a;transform:scaleX(0.9245);">Installed</div>
<div class="t" style="left:632.00px;top:312.00px;font-size:14.5px;color:#2a2a2a;transform:scaleX(0.9300);">104</div>
<div class="t" style="left:848.00px;top:312.00px;font-size:14.5px;color:#2a2a2a;transform:scaleX(0.8690);">CPI</div>
<div class="t" style="left:972.00px;top:312.00px;font-size:14.5px;color:#2a2a2a;transform:scaleX(0.9179);">48RU-Cabinet GlobalFrame-3A-...</div>
<div class="t" style="left:1189.00px;top:312.00px;font-size:14.5px;color:#2a2a2a;transform:scaleX(0.9300);">104</div>
<svg class="ico" style="left:11px;top:351.5px" width="12" height="10" viewBox="0 0 12 10"><path d="M1 5 L4.5 8.5 L11 1.5" fill="none" stroke="#d9d9d9" stroke-width="2"/></svg>
<div class="t" style="left:45.00px;top:350.00px;font-size:14.5px;color:#2a2a2a;transform:scaleX(0.8742);">SITE COLO</div>
<div class="t" style="left:261.00px;top:350.00px;font-size:14.5px;color:#2a2a2a;transform:scaleX(0.9164);">Cabinet</div>
<div class="t" style="left:509.00px;top:350.00px;font-size:14.5px;color:#2a2a2a;transform:scaleX(0.9245);">Installed</div>
<div class="t" style="left:632.00px;top:350.00px;font-size:14.5px;color:#2a2a2a;transform:scaleX(0.9300);">105</div>
<div class="t" style="left:848.00px;top:350.00px;font-size:14.5px;color:#2a2a2a;transform:scaleX(0.8690);">CPI</div>
<div class="t" style="left:972.00px;top:350.00px;font-size:14.5px;color:#2a2a2a;transform:scaleX(0.9179);">48RU-Cabinet GlobalFrame-3A-...</div>
<div class="t" style="left:1189.00px;top:350.00px;font-size:14.5px;color:#2a2a2a;transform:scaleX(0.9300);">105</div>
<svg class="ico" style="left:11px;top:389.0px" width="12" height="10" viewBox="0 0 12 10"><path d="M1 5 L4.5 8.5 L11 1.5" fill="none" stroke="#d9d9d9" stroke-width="2"/></svg>
<div class="t" style="left:45.00px;top:387.00px;font-size:14.5px;color:#2a2a2a;transform:scaleX(0.8742);">SITE COLO</div>
<div class="t" style="left:261.00px;top:387.00px;font-size:14.5px;color:#2a2a2a;transform:scaleX(0.9164);">Cabinet</div>
<div class="t" style="left:509.00px;top:387.00px;font-size:14.5px;color:#2a2a2a;transform:scaleX(0.9245);">Installed</div>
<div class="t" style="left:632.00px;top:387.00px;font-size:14.5px;color:#2a2a2a;transform:scaleX(0.9300);">106</div>
<div class="t" style="left:848.00px;top:387.00px;font-size:14.5px;color:#2a2a2a;transform:scaleX(0.8690);">CPI</div>
<div class="t" style="left:972.00px;top:387.00px;font-size:14.5px;color:#2a2a2a;transform:scaleX(0.9179);">48RU-Cabinet GlobalFrame-3A-...</div>
<div class="t" style="left:1189.00px;top:387.00px;font-size:14.5px;color:#2a2a2a;transform:scaleX(0.9300);">106</div>
<svg class="ico" style="left:11px;top:426.5px" width="12" height="10" viewBox="0 0 12 10"><path d="M1 5 L4.5 8.5 L11 1.5" fill="none" stroke="#d9d9d9" stroke-width="2"/></svg>
<div class="t" style="left:45.00px;top:425.00px;font-size:14.5px;color:#2a2a2a;transform:scaleX(0.8742);">SITE COLO</div>
<div class="t" style="left:261.00px;top:425.00px;font-size:14.5px;color:#2a2a2a;transform:scaleX(0.9164);">Cabinet</div>
<div class="t" style="left:509.00px;top:425.00px;font-size:14.5px;color:#2a2a2a;transform:scaleX(0.9187);">Archived</div>
<div class="t" style="left:632.00px;top:425.00px;font-size:14.5px;color:#2a2a2a;transform:scaleX(0.9300);">107</div>
<div class="t" style="left:848.00px;top:425.00px;font-size:14.5px;color:#2a2a2a;transform:scaleX(0.8690);">CPI</div>
<div class="t" style="left:972.00px;top:425.00px;font-size:14.5px;color:#2a2a2a;transform:scaleX(0.9179);">48RU-Cabinet GlobalFrame-3A-...</div>
<div class="t" style="left:1189.00px;top:425.00px;font-size:14.5px;color:#2a2a2a;transform:scaleX(0.9300);">107</div>
<svg class="ico" style="left:11px;top:464.0px" width="12" height="10" viewBox="0 0 12 10"><path d="M1 5 L4.5 8.5 L11 1.5" fill="none" stroke="#d9d9d9" stroke-width="2"/></svg>
<div class="t" style="left:45.00px;top:462.00px;font-size:14.5px;color:#2a2a2a;transform:scaleX(0.8742);">SITE COLO</div>
<div class="t" style="left:261.00px;top:462.00px;font-size:14.5px;color:#2a2a2a;transform:scaleX(0.9164);">Cabinet</div>
<div class="t" style="left:509.00px;top:462.00px;font-size:14.5px;color:#2a2a2a;transform:scaleX(0.9245);">Installed</div>
<div class="t" style="left:632.00px;top:462.00px;font-size:14.5px;color:#2a2a2a;transform:scaleX(0.9300);">108</div>
<div class="t" style="left:848.00px;top:462.00px;font-size:14.5px;color:#2a2a2a;transform:scaleX(0.8690);">CPI</div>
<div class="t" style="left:972.00px;top:462.00px;font-size:14.5px;color:#2a2a2a;transform:scaleX(0.9179);">48RU-Cabinet GlobalFrame-3A-...</div>
<div class="t" style="left:1189.00px;top:462.00px;font-size:14.5px;color:#2a2a2a;transform:scaleX(0.9300);">108</div>
<svg class="ico" style="left:11px;top:501.5px" width="12" height="10" viewBox="0 0 12 10"><path d="M1 5 L4.5 8.5 L11 1.5" fill="none" stroke="#d9d9d9" stroke-width="2"/></svg>
<div class="t" style="left:45.00px;top:500.00px;font-size:14.5px;color:#2a2a2a;transform:scaleX(0.8742);">SITE COLO</div>
<div class="t" style="left:261.00px;top:500.00px;font-size:14.5px;color:#2a2a2a;transform:scaleX(0.9164);">Cabinet</div>
<div class="t" style="left:509.00px;top:500.00px;font-size:14.5px;color:#2a2a2a;transform:scaleX(0.9245);">Installed</div>
<div class="t" style="left:632.00px;top:500.00px;font-size:14.5px;color:#2a2a2a;transform:scaleX(0.9300);">109</div>
<div class="t" style="left:848.00px;top:500.00px;font-size:14.5px;color:#2a2a2a;transform:scaleX(0.8690);">CPI</div>
<div class="t" style="left:972.00px;top:500.00px;font-size:14.5px;color:#2a2a2a;transform:scaleX(0.9179);">48RU-Cabinet GlobalFrame-3A-...</div>
<div class="t" style="left:1189.00px;top:500.00px;font-size:14.5px;color:#2a2a2a;transform:scaleX(0.9300);">109</div>
<svg class="ico" style="left:11px;top:539.0px" width="12" height="10" viewBox="0 0 12 10"><path d="M1 5 L4.5 8.5 L11 1.5" fill="none" stroke="#d9d9d9" stroke-width="2"/></svg>
<div class="t" style="left:45.00px;top:537.00px;font-size:14.5px;color:#2a2a2a;transform:scaleX(0.8742);">SITE COLO</div>
<div class="t" style="left:261.00px;top:537.00px;font-size:14.5px;color:#2a2a2a;transform:scaleX(0.9164);">Cabinet</div>
<div class="t" style="left:509.00px;top:537.00px;font-size:14.5px;color:#2a2a2a;transform:scaleX(0.9245);">Installed</div>
<div class="t" style="left:632.00px;top:537.00px;font-size:14.5px;color:#2a2a2a;transform:scaleX(0.9733);">110</div>
<div class="t" style="left:848.00px;top:537.00px;font-size:14.5px;color:#2a2a2a;transform:scaleX(0.8690);">CPI</div>
<div class="t" style="left:972.00px;top:537.00px;font-size:14.5px;color:#2a2a2a;transform:scaleX(0.9179);">48RU-Cabinet GlobalFrame-3A-...</div>
<div class="t" style="left:1189.00px;top:537.00px;font-size:14.5px;color:#2a2a2a;transform:scaleX(0.9733);">110</div>
<svg class="ico" style="left:11px;top:576.5px" width="12" height="10" viewBox="0 0 12 10"><path d="M1 5 L4.5 8.5 L11 1.5" fill="none" stroke="#d9d9d9" stroke-width="2"/></svg>
<div class="t" style="left:45.00px;top:575.00px;font-size:14.5px;color:#2a2a2a;transform:scaleX(0.8742);">SITE COLO</div>
<div class="t" style="left:261.00px;top:575.00px;font-size:14.5px;color:#2a2a2a;transform:scaleX(0.9164);">Cabinet</div>
<div class="t" style="left:509.00px;top:575.00px;font-size:14.5px;color:#2a2a2a;transform:scaleX(0.9181);">Planned</div>
<div class="t" style="left:632.00px;top:575.00px;font-size:14.5px;color:#2a2a2a;transform:scaleX(0.9630);">11-12</div>
<div class="t" style="left:848.00px;top:575.00px;font-size:14.5px;color:#2a2a2a;transform:scaleX(0.8690);">CPI</div>
<div class="t" style="left:972.00px;top:575.00px;font-size:14.5px;color:#2a2a2a;transform:scaleX(0.9152);">45RU-Cabinet GlobalFrame-GF-...</div>
<div class="t" style="left:1189.00px;top:575.00px;font-size:14.5px;color:#2a2a2a;transform:scaleX(0.9630);">11-12</div>
<svg class="ico" style="left:11px;top:614.0px" width="12" height="10" viewBox="0 0 12 10"><path d="M1 5 L4.5 8.5 L11 1.5" fill="none" stroke="#d9d9d9" stroke-width="2"/></svg>
<div class="t" style="left:45.00px;top:612.00px;font-size:14.5px;color:#2a2a2a;transform:scaleX(0.8933);">SITE A</div>
<div class="t" style="left:261.00px;top:612.00px;font-size:14.5px;color:#2a2a2a;transform:scaleX(0.9164);">Cabinet</div>
<div class="t" style="left:509.00px;top:612.00px;font-size:14.5px;color:#2a2a2a;transform:scaleX(0.9245);">Installed</div>
<div class="t" style="left:632.00px;top:612.00px;font-size:14.5px;color:#2a2a2a;transform:scaleX(0.8967);">1A</div>
<div class="t" style="left:848.00px;top:612.00px;font-size:14.5px;color:#2a2a2a;transform:scaleX(0.8690);">CPI</div>
<div class="t" style="left:972.00px;top:612.00px;font-size:14.5px;color:#2a2a2a;transform:scaleX(0.9212);">42RU-TeraFrame Cabinet 42D</div>
<div class="t" style="left:1189.00px;top:612.00px;font-size:14.5px;color:#2a2a2a;transform:scaleX(0.8967);">1A</div>
<div class="t" style="left:1683.00px;top:612.00px;font-size:14.5px;color:#2a2a2a;transform:scaleX(0.9300);">123456789</div>
<div class="t" style="left:1807.00px;top:612.00px;font-size:14.5px;color:#2a2a2a;transform:scaleX(0.9164);">Cabinet</div>
<svg class="ico" style="left:11px;top:651.5px" width="12" height="10" viewBox="0 0 12 10"><path d="M1 5 L4.5 8.5 L11 1.5" fill="none" stroke="#d9d9d9" stroke-width="2"/></svg>
<div class="t" style="left:45.00px;top:650.00px;font-size:14.5px;color:#2a2a2a;transform:scaleX(0.8933);">SITE A</div>
<div class="t" style="left:261.00px;top:650.00px;font-size:14.5px;color:#2a2a2a;transform:scaleX(0.9144);">Data Panel</div>
<div class="t" style="left:509.00px;top:650.00px;font-size:14.5px;color:#2a2a2a;transform:scaleX(0.9245);">Installed</div>
<div class="t" style="left:632.00px;top:650.00px;font-size:14.5px;color:#2a2a2a;transform:scaleX(0.9071);">1A1</div>
<div class="t" style="left:848.00px;top:650.00px;font-size:14.5px;color:#2a2a2a;transform:scaleX(0.9175);">Ortronics</div>
<div class="t" style="left:972.00px;top:650.00px;font-size:14.5px;color:#2a2a2a;transform:scaleX(0.9123);">2RU-48p RJ45, Flat</div>
<div class="t" style="left:1189.00px;top:650.00px;font-size:14.5px;color:#2a2a2a;transform:scaleX(0.8967);">1A</div>
<div class="t" style="left:1312.00px;top:650.00px;font-size:14.5px;color:#2a2a2a;transform:scaleX(0.9300);">40</div>
<div class="t" style="left:1807.00px;top:650.00px;font-size:14.5px;color:#2a2a2a;transform:scaleX(0.9158);">Copper</div>
<svg class="ico" style="left:11px;top:689.0px" width="12" height="10" viewBox="0 0 12 10"><path d="M1 5 L4.5 8.5 L11 1.5" fill="none" stroke="#d9d9d9" stroke-width="2"/></svg>
<div class="t" style="left:45.00px;top:687.00px;font-size:14.5px;color:#2a2a2a;transform:scaleX(0.8933);">SITE A</div>
<div class="t" style="left:261.00px;top:687.00px;font-size:14.5px;color:#2a2a2a;transform:scaleX(0.8950);">Rack PDU</div>
<div class="t" style="left:509.00px;top:687.00px;font-size:14.5px;color:#2a2a2a;transform:scaleX(0.9245);">Installed</div>
<div class="t" style="left:632.00px;top:687.00px;font-size:14.5px;color:#2a2a2a;transform:scaleX(0.8880);">1A-RPDU-L</div>
<div class="t" style="left:848.00px;top:687.00px;font-size:14.5px;color:#2a2a2a;transform:scaleX(0.9156);">Raritan</div>
<div class="t" style="left:972.00px;top:687.00px;font-size:14.5px;color:#2a2a2a;transform:scaleX(0.9052);">Dominion PX DPCS12-20L</div>
<div class="t" style="left:1189.00px;top:687.00px;font-size:14.5px;color:#2a2a2a;transform:scaleX(0.8967);">1A</div>
<div class="t" style="left:1312.00px;top:687.00px;font-size:14.5px;color:#2a2a2a;transform:scaleX(0.9300);">3</div>
<div class="t" style="left:1807.00px;top:687.00px;font-size:14.5px;color:#2a2a2a;transform:scaleX(0.9146);">Single</div>
<svg class="ico" style="left:11px;top:726.5px" width="12" height="10" viewBox="0 0 12 10"><path d="M1 5 L4.5 8.5 L11 1.5" fill="none" stroke="#d9d9d9" stroke-width="2"/></svg>
<div class="t" style="left:45.00px;top:725.00px;font-size:14.5px;color:#2a2a2a;transform:scaleX(0.8933);">SITE A</div>
<div class="t" style="left:261.00px;top:725.00px;font-size:14.5px;color:#2a2a2a;transform:scaleX(0.8950);">Rack PDU</div>
<div class="t" style="left:509.00px;top:725.00px;font-size:14.5px;color:#2a2a2a;transform:scaleX(0.9245);">Installed</div>
<div class="t" style="left:632.00px;top:725.00px;font-size:14.5px;color:#2a2a2a;transform:scaleX(0.8875);">1A-RPDU-R</div>
<div class="t" style="left:848.00px;top:725.00px;font-size:14.5px;color:#2a2a2a;transform:scaleX(0.9156);">Raritan</div>
<div class="t" style="left:972.00px;top:725.00px;font-size:14.5px;color:#2a2a2a;transform:scaleX(0.9146);">PX3-5496</div>
<div class="t" style="left:1189.00px;top:725.00px;font-size:14.5px;color:#2a2a2a;transform:scaleX(0.8967);">1A</div>
<div class="t" style="left:1312.00px;top:725.00px;font-size:14.5px;color:#2a2a2a;transform:scaleX(0.9300);">3</div>
<div class="t" style="left:1807.00px;top:725.00px;font-size:14.5px;color:#2a2a2a;transform:scaleX(0.9146);">Single</div>
</div>
<div class="a" style="left:0;top:175px;width:1px;height:861px;background:#d6d6d6"></div>
<div id="vsb"></div><div id="hsb"></div><div id="corner"></div><div id="gright"></div><div id="gleftw"></div>
<div class="a" style="left:1855.5px;top:277px;width:16.5px;height:144px;background:#c1c1c1"></div>
<svg class="ico" style="left:1858.5px;top:265px" width="10" height="6" viewBox="0 0 10 6"><path d="M0 5.5 L10 5.5 L5 0.5 Z" fill="#a3a3a3"/></svg>
<svg class="ico" style="left:1858.5px;top:999.5px" width="10" height="6" viewBox="0 0 10 6"><path d="M0 0.5 L10 0.5 L5 5.5 Z" fill="#505050"/></svg>
<div class="a" style="left:59.5px;top:1016px;width:738px;height:17px;background:#c1c1c1"></div>
<svg class="ico" style="left:46.5px;top:1020px" width="6" height="10" viewBox="0 0 6 10"><path d="M5.5 0 L5.5 10 L0.5 5 Z" fill="#a3a3a3"/></svg>
<svg class="ico" style="left:1840.5px;top:1020px" width="6" height="10" viewBox="0 0 6 10"><path d="M0.5 0 L0.5 10 L5.5 5 Z" fill="#505050"/></svg>
<div class="a" style="left:1884px;top:591px;width:2px;height:28px;background:#d9d9d9"></div>
<div class="a" style="left:1887px;top:591px;width:1px;height:28px;background:#a9a9a9"></div>
<div class="a" style="left:1889px;top:591px;width:2px;height:28px;background:#d9d9d9"></div>

<div id="foot"></div>
<div class="t" style="left:1696.50px;top:1058.00px;font-size:14.2px;color:#333;transform:scaleX(0.9255);">Rows 1 - 100 of the 4344 items</div>
</body></html>
